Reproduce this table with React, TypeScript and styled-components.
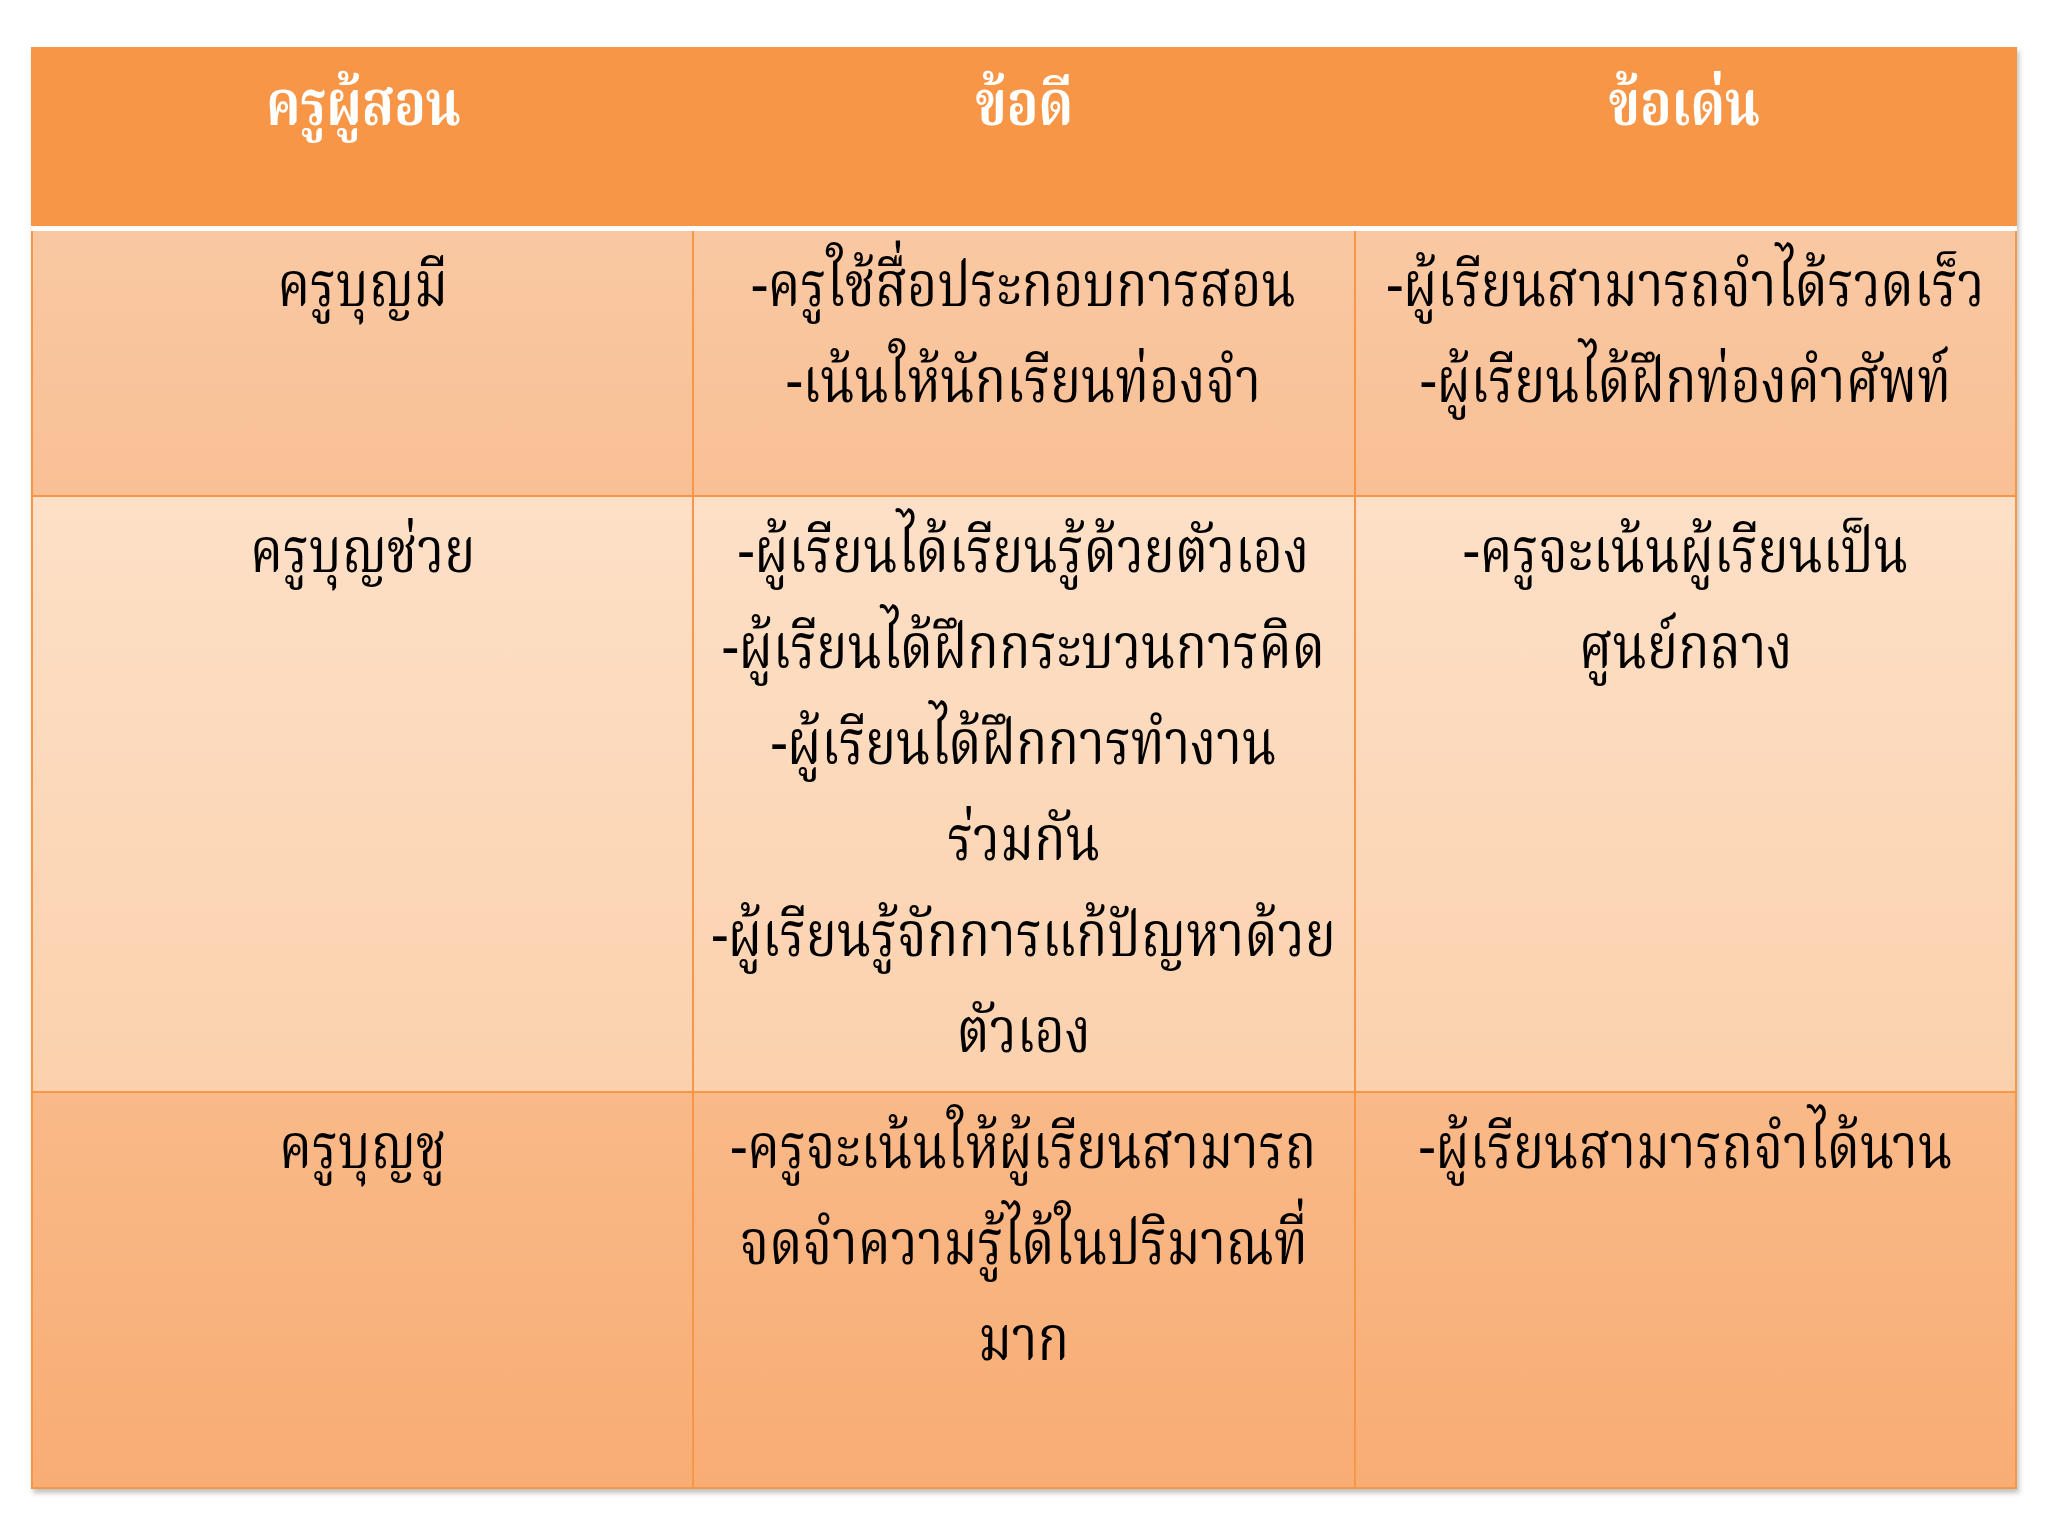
import styled, { createGlobalStyle } from "styled-components";

const GlobalStyle = createGlobalStyle`
  html, body {
    margin: 0;
    padding: 0;
    background: #ffffff;
  }
`;

const thaiFont = `"Noto Serif Thai", "Noto Sans Thai", "Liberation Serif", serif`;

const Page = styled.div`
    width: 2048px;
    height: 1536px;
    padding: 47px 31px 0 31px;
    box-sizing: border-box;
    font-family: ${thaiFont};
`;

const Table = styled.div`
    display: flex;
    flex-direction: column;
    width: 1986px;
    background: #f79646;
    box-shadow: 2px 4px 5px rgba(0, 0, 0, 0.25);
`;

const Header = styled.div`
    display: grid;
    grid-template-columns: repeat(3, 1fr);
    height: 179px;
    padding: 0 2px;
`;

const HeadCell = styled.div`
    color: #ffffff;
    font-weight: bold;
    font-size: 62px;
    line-height: 95px;
    padding-top: 14px;
`;

const Rule = styled.div`
    height: 5px;
    background: #ffffff;
`;

const Body = styled.div`
    display: grid;
    grid-template-columns: repeat(3, 1fr);
    grid-template-rows: 264px 594px 394px;
    gap: 2px;
    padding: 0 2px 2px 2px;
`;

const bands = [
    "linear-gradient(180deg, #f9c8a2 0%, #f9c095 100%)",
    "linear-gradient(180deg, #fde0c7 0%, #fbd1ad 100%)",
    "linear-gradient(180deg, #f9b988 0%, #f8ad74 100%)",
];

const Cell = styled.div<{ $band: number }>`
    background: ${(p) => bands[p.$band]};
    color: #000000;
    font-size: 62px;
    line-height: 96px;
    padding-top: 11px;
    overflow: hidden;
`;

// Angsana-like narrow Thai text: squeeze the serif Thai face horizontally
const Line = styled.div`
    display: flex;
    justify-content: center;
    white-space: nowrap;
    transform: scaleX(0.84);
    transform-origin: center;
`;

const heads = ["ครูผู้สอน", "ข้อดี", "ข้อเด่น"];

const rows: string[][][] = [
    [
        ["ครูบุญมี"],
        ["-ครูใช้สื่อประกอบการสอน", "-เน้นให้นักเรียนท่องจำ"],
        ["-ผู้เรียนสามารถจำได้รวดเร็ว", "-ผู้เรียนได้ฝึกท่องคำศัพท์"],
    ],
    [
        ["ครูบุญช่วย"],
        [
            "-ผู้เรียนได้เรียนรู้ด้วยตัวเอง",
            "-ผู้เรียนได้ฝึกกระบวนการคิด",
            "-ผู้เรียนได้ฝึกการทำงาน",
            "ร่วมกัน",
            "-ผู้เรียนรู้จักการแก้ปัญหาด้วย",
            "ตัวเอง",
        ],
        ["-ครูจะเน้นผู้เรียนเป็น", "ศูนย์กลาง"],
    ],
    [
        ["ครูบุญชู"],
        ["-ครูจะเน้นให้ผู้เรียนสามารถ", "จดจำความรู้ได้ในปริมาณที่", "มาก"],
        ["-ผู้เรียนสามารถจำได้นาน"],
    ],
];

export default function App() {
    return (
        <Page>
            <GlobalStyle />
            <Table>
                <Header>
                    {heads.map((h) => (
                        <HeadCell key={h}>
                            <Line>{h}</Line>
                        </HeadCell>
                    ))}
                </Header>
                <Rule />
                <Body>
                    {rows.map((row, r) =>
                        row.map((cell, c) => (
                            <Cell key={`${r}-${c}`} $band={r}>
                                {cell.map((text, i) => (
                                    <Line key={i}>{text}</Line>
                                ))}
                            </Cell>
                        ))
                    )}
                </Body>
            </Table>
        </Page>
    );
}
